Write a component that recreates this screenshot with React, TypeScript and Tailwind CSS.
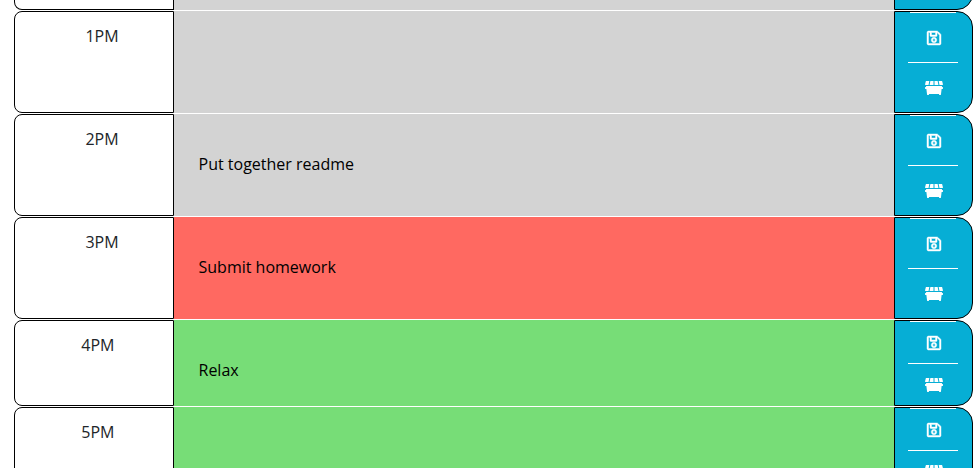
import { FaDumpster, FaRegSave } from "react-icons/fa";

type Slot = { time: string; text: string; tone: string; size: string; pad: string };

const slots: Slot[] = [
  { time: "1PM", text: "", tone: "bg-[#d3d3d3]", size: "h-[102px]", pad: "pr-[54.4px]" },
  { time: "2PM", text: "Put together readme", tone: "bg-[#d3d3d3]", size: "h-[102px]", pad: "pr-[54.4px]" },
  { time: "3PM", text: "Submit homework", tone: "bg-[#ff6961]", size: "h-[102px]", pad: "pr-[54.4px]" },
  { time: "4PM", text: "Relax", tone: "bg-[#77dd77]", size: "h-[86px]", pad: "pr-[58.5px]" },
  { time: "5PM", text: "", tone: "bg-[#77dd77]", size: "h-[86px]", pad: "pr-[58.5px]" },
];

function Actions() {
  return (
    <div className="flex w-[79px] shrink-0 flex-col items-start rounded-r-[16px] border border-black bg-[#06aed5] pl-[13px] text-base text-white">
      <button className="flex w-[50px] flex-1 flex-col items-center">
        <span className="h-px w-[46px] shrink-0 bg-white" />
        <span className="flex flex-1 items-center pl-px pt-px">
          <FaRegSave className="[stroke-width:14]" />
        </span>
      </button>
      <button className="flex w-[50px] flex-1 flex-col items-center">
        <span className="h-px w-full shrink-0 bg-white" />
        <span className="flex flex-1 items-center pl-px pt-px">
          <FaDumpster className="h-4 w-[18px]" />
        </span>
      </button>
    </div>
  );
}

function Row({ slot }: { slot: Slot }) {
  return (
    <div className={`flex shrink-0 ${slot.size}`}>
      <div className={`w-[160px] shrink-0 rounded-l-[8px] border border-black pt-3 text-right text-[#212529] ${slot.pad}`}>
        {slot.time}
      </div>
      <div className={`flex-1 pl-[24.5px] pt-[38px] text-black ${slot.tone}`}>{slot.text}</div>
      <Actions />
    </div>
  );
}

export default function App() {
  return (
    <div className="flex h-[468px] w-[977px] flex-col gap-px overflow-hidden bg-white pl-[14px] pr-1 font-['Open_Sans',sans-serif] text-base font-normal">
      <div className="flex h-[10px] shrink-0">
        <div className="w-[160px] shrink-0 rounded-bl-[8px] border border-t-0 border-black" />
        <div className="flex-1 bg-[#d3d3d3]" />
        <div className="flex w-[79px] shrink-0 items-end overflow-hidden">
          <div className="h-[40px] w-full shrink-0 rounded-r-[16px] border border-black bg-[#06aed5]" />
        </div>
      </div>
      {slots.map((slot) => (
        <Row key={slot.time} slot={slot} />
      ))}
    </div>
  );
}
